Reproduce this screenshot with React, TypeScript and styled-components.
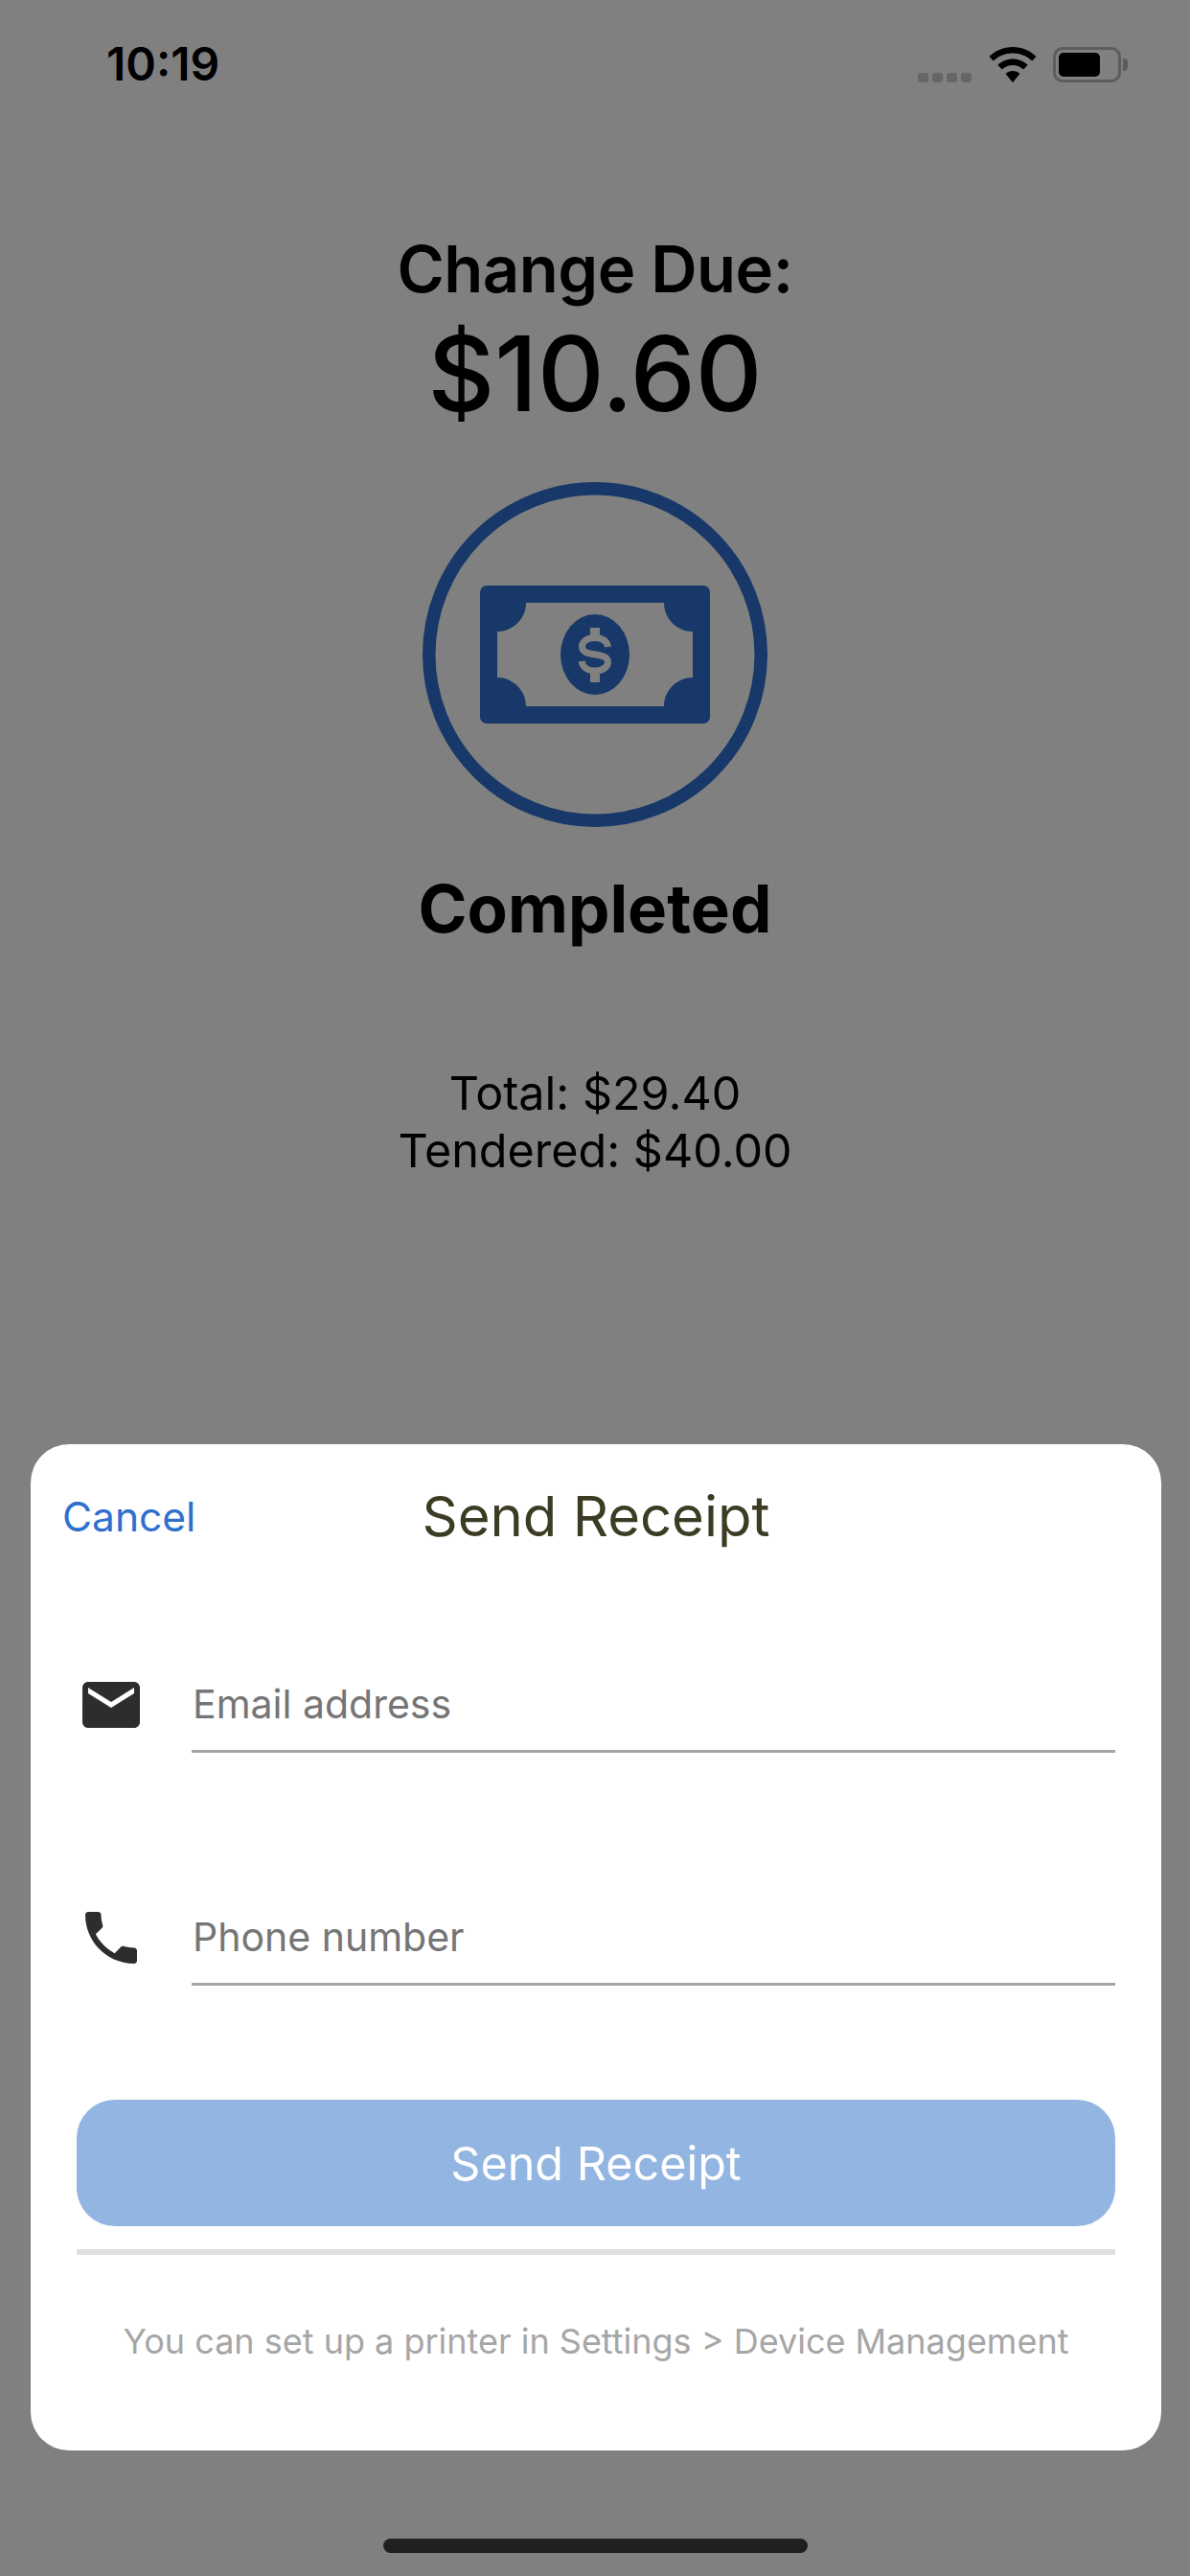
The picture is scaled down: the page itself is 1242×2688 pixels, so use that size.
import React from "react";
import styled, { createGlobalStyle } from "styled-components";
import { MdEmail, MdPhone } from "react-icons/md";

const GlobalStyle = createGlobalStyle`
    html, body {
        margin: 0;
        padding: 0;
        background: #808080;
    }
    * {
        box-sizing: border-box;
    }
`;

const App = () => {
    return (
        <Page>
            <GlobalStyle />
            <StatusBar>
                <Clock>10:19</Clock>
                <StatusIcons>
                    <SignalDots>
                        <i />
                        <i />
                        <i />
                        <i />
                    </SignalDots>
                    <svg width="50" height="37" viewBox="0 0 50 37">
                        <path d="M25 0C15.5 0 7 3.8 0.5 10l4.2 4.6C10 9.5 17 6.4 25 6.4s15 3.1 20.3 8.2l4.2-4.6C43 3.8 34.5 0 25 0z" fill="#000" />
                        <path d="M25 12.5c-6 0-11.4 2.4-15.6 6.2l4.3 4.7c3-2.7 7-4.5 11.3-4.5s8.3 1.8 11.3 4.5l4.3-4.7C36.4 14.900 31 12.500 25 12.500z" fill="#000" />
                        <path d="M25 25c-2.900 0-5.500 1.100-7.500 2.900L25 37l7.500-9.100C30.500 26.100 27.900 25 25 25z" fill="#000" />
                    </svg>
                    <Battery>
                        <BatteryFill />
                    </Battery>
                </StatusIcons>
            </StatusBar>

            <Summary>
                <ChangeLabel>Change Due:</ChangeLabel>
                <ChangeAmount>$10.60</ChangeAmount>
                <CashBadge viewBox="0 0 360 360" width="360" height="360">
                    <circle cx="180" cy="180" r="173.250" fill="none" stroke="#173868" strokeWidth="13.500" />
                    <rect x="60" y="108" width="240" height="144" rx="7" fill="#173868" />
                    <path
                        d="M108 126h144c0 16.500 13.500 30 30 30v48c-16.500 0-30 13.500-30 30h-144c0-16.500-13.500-30-30-30v-48c16.500 0 30-13.500 30-30z"
                        fill="#808080"
                    />
                    <ellipse cx="180" cy="180" rx="36" ry="42" fill="#173868" />
                    <path
                        d="M193.500 172C192.500 166 187 162.500 180 162.500C172 162.500 166.500 166.500 166.500 171.500C166.500 184 193.500 176 193.500 188C193.500 193 188 197 180 197C172 197 167 193 166 187"
                        fill="none"
                        stroke="#808080"
                        strokeWidth="7"
                    />
                    <rect x="175" y="152" width="10" height="10" fill="#808080" />
                    <rect x="175" y="198" width="10" height="11" fill="#808080" />
                </CashBadge>
                <StatusTitle>Completed</StatusTitle>
                <Totals>
                    <TotalLine>Total: $29.40</TotalLine>
                    <TotalLine>Tendered: $40.00</TotalLine>
                </Totals>
            </Summary>

            <Sheet>
                <SheetHeader>
                    <CancelLink>Cancel</CancelLink>
                    <SheetTitle>Send Receipt</SheetTitle>
                </SheetHeader>

                <FieldRow>
                    <FieldIcon>
                        <MdEmail size={72} />
                    </FieldIcon>
                    <FieldInput type="email" placeholder="Email address" />
                </FieldRow>
                <FieldRow $second>
                    <FieldIcon>
                        <MdPhone size={72} />
                    </FieldIcon>
                    <FieldInput type="tel" placeholder="Phone number" />
                </FieldRow>

                <SendButton disabled>Send Receipt</SendButton>
                <Divider />
                <PrinterHint>You can set up a printer in Settings &gt; Device Management</PrinterHint>
            </Sheet>

            <HomeBar />
        </Page>
    );
};
export default App;

const Page = styled.div`
    width: 1242px;
    height: 2688px;
    background: #808080;
    font-family: Inter, "Liberation Sans", sans-serif;
    overflow: hidden;
    display: flex;
    flex-direction: column;
    align-items: center;
`;

const StatusBar = styled.div`
    width: 100%;
    height: 130px;
    padding: 44px 72px 0 111px;
    display: flex;
    justify-content: space-between;
    align-items: flex-start;
`;

const Clock = styled.div`
    font-size: 48px;
    line-height: 46px;
    font-weight: 600;
    color: #000;
`;

const StatusIcons = styled.div`
    display: flex;
    align-items: flex-end;
    margin-top: 5px;
    height: 37px;
`;

const SignalDots = styled.div`
    display: flex;
    gap: 4px;
    margin-right: 18px;

    i {
        display: block;
        width: 11px;
        height: 10px;
        border-radius: 3px;
        background: #666;
    }
`;

const Battery = styled.div`
    position: relative;
    margin-left: 17px;
    width: 71px;
    height: 37px;
    padding: 3px;
    border: 3px solid #5c5c5c;
    border-radius: 10px;

    &::after {
        content: "";
        position: absolute;
        right: -10px;
        top: 9px;
        width: 5px;
        height: 13px;
        border-radius: 0 4px 4px 0;
        background: #5c5c5c;
    }
`;

const BatteryFill = styled.div`
    width: 43px;
    height: 100%;
    border-radius: 5px;
    background: #000;
`;

const Summary = styled.div`
    display: flex;
    flex-direction: column;
    align-items: center;
    color: #000;
`;

const ChangeLabel = styled.div`
    margin-top: 111px;
    font-size: 67px;
    line-height: 80px;
    font-weight: 600;
    letter-spacing: -0.5px;
`;

const ChangeAmount = styled.div`
    margin-top: 9px;
    font-size: 108px;
    line-height: 120px;
    font-weight: 500;
`;

const CashBadge = styled.svg`
    display: block;
    margin-top: 53px;
`;

const StatusTitle = styled.div`
    margin-top: 45px;
    font-size: 69px;
    line-height: 80px;
    font-weight: 700;
`;

const Totals = styled.div`
    margin-top: 123px;
    display: flex;
    flex-direction: column;
    align-items: center;
`;

const TotalLine = styled.div`
    font-size: 48.500px;
    line-height: 60px;
    font-weight: 400;
`;

const Sheet = styled.div`
    position: absolute;
    top: 1507px;
    left: 32px;
    width: 1180px;
    height: 1050px;
    background: #fff;
    border-radius: 40px;
    padding: 0 48px;
    display: flex;
    flex-direction: column;
`;

const SheetHeader = styled.div`
    position: relative;
    height: 150px;
    display: flex;
    align-items: center;
    justify-content: center;
`;

const CancelLink = styled.span`
    position: absolute;
    left: -15px;
    top: 50%;
    transform: translateY(-50%);
    font-size: 42.500px;
    color: #2f6fce;
`;

const SheetTitle = styled.h1`
    margin: 0;
    font-size: 58px;
    line-height: 70px;
    font-weight: 400;
    color: #3c3c24;
`;

const FieldRow = styled.div<{ $second?: boolean }>`
    height: 100px;
    margin-top: ${(p) => (p.$second ? "143px" : "72px")};
    display: flex;
    align-items: center;
`;

const FieldIcon = styled.div`
    width: 120px;
    flex: none;
    color: #2d2d2d;
    display: flex;
    svg {
        display: block;
    }
`;

const FieldInput = styled.input`
    flex: 1;
    height: 100px;
    padding: 0 0 0 1px;
    border: 0;
    border-bottom: 3px solid #a4a4a4;
    outline: none;
    background: transparent;
    font-family: Inter, "Liberation Sans", sans-serif;
    font-size: 41px;
    color: #333;

    &::placeholder {
        color: #757575;
        opacity: 1;
    }
`;

const SendButton = styled.button`
    margin-top: 119px;
    height: 132px;
    border: 0;
    border-radius: 40px;
    background: #93b5e2;
    color: #fff;
    font-family: Inter, "Liberation Sans", sans-serif;
    font-size: 48.500px;
    font-weight: 400;
`;

const Divider = styled.div`
    margin-top: 24px;
    height: 6px;
    background: #dedede;
`;

const PrinterHint = styled.div`
    margin-top: 68px;
    text-align: center;
    font-size: 36px;
    line-height: 44px;
    color: #a6a6a6;
`;

const HomeBar = styled.div`
    position: absolute;
    top: 2649px;
    left: 400px;
    width: 443px;
    height: 15px;
    border-radius: 8px;
    background: #202020;
`;
